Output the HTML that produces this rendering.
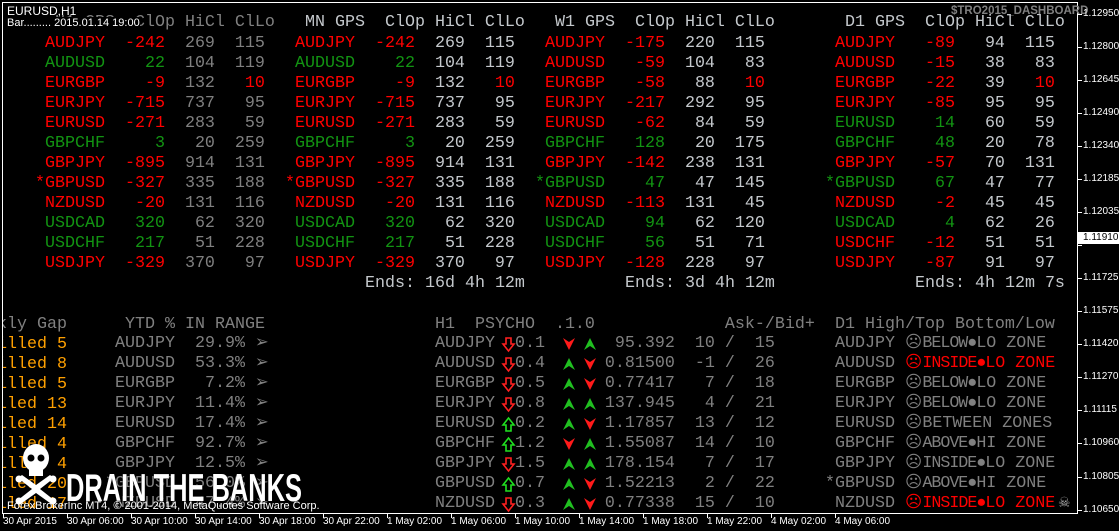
<!DOCTYPE html>
<html><head><meta charset="utf-8"><style>
html,body{margin:0;padding:0;background:#000;width:1119px;height:531px;overflow:hidden;position:relative}
.p{position:absolute;white-space:pre;font-family:"Liberation Mono",monospace;font-size:16.67px;line-height:20px;margin-top:2px}
.s{position:absolute;white-space:pre;font-family:"Liberation Sans",sans-serif;font-size:11px;line-height:12px;color:#fff}
.r{color:#ff0000}.g{color:#129412}.y{color:#808080}.L{color:#c4c8cc}.o{color:#ffa000}
.ax{position:absolute;left:1077px;width:5px;height:1px;background:#fff}
.tk{position:absolute;top:513px;width:1px;height:5px;background:#fff}
.pa{font-size:10px !important;left:1083px}
.ta{font-size:10px !important;top:516px}
</style></head><body>
<div style="position:absolute;left:2px;top:2px;width:1074px;height:510px;border:1px solid #fff"></div>

<div class="p y" style="left:55px;top:11px">H1 GPS  ClOp HiCl ClLo</div>
<div class="p y" style="left:35px;top:32px"><span class="r"> AUDJPY  -242</span>  269  115
<span class="g"> AUDUSD    22</span>  104  119
<span class="r"> EURGBP    -9</span>  132<span class="r">   10</span>
<span class="r"> EURJPY  -715</span>  737   95
<span class="r"> EURUSD  -271</span>  283   59
<span class="g"> GBPCHF     3</span>   20  259
<span class="r"> GBPJPY  -895</span>  914  131
<span class="r">*GBPUSD  -327</span>  335  188
<span class="r"> NZDUSD   -20</span>  131  116
<span class="g"> USDCAD   320</span>   62  320
<span class="g"> USDCHF   217</span>   51  228
<span class="r"> USDJPY  -329</span>  370   97</div>

<div class="p L" style="left:305px;top:11px">MN GPS  ClOp HiCl ClLo</div>
<div class="p L" style="left:285px;top:32px"><span class="r"> AUDJPY  -242</span>  269  115
<span class="g"> AUDUSD    22</span>  104  119
<span class="r"> EURGBP    -9</span>  132<span class="r">   10</span>
<span class="r"> EURJPY  -715</span>  737   95
<span class="r"> EURUSD  -271</span>  283   59
<span class="g"> GBPCHF     3</span>   20  259
<span class="r"> GBPJPY  -895</span>  914  131
<span class="r">*GBPUSD  -327</span>  335  188
<span class="r"> NZDUSD   -20</span>  131  116
<span class="g"> USDCAD   320</span>   62  320
<span class="g"> USDCHF   217</span>   51  228
<span class="r"> USDJPY  -329</span>  370   97</div>
<div class="p L" style="left:365px;top:272px">Ends: 16d 4h 12m</div>

<div class="p L" style="left:555px;top:11px">W1 GPS  ClOp HiCl ClLo</div>
<div class="p L" style="left:535px;top:32px"><span class="r"> AUDJPY  -175</span>  220  115
<span class="r"> AUDUSD   -59</span>  104   83
<span class="r"> EURGBP   -58</span>   88<span class="r">   10</span>
<span class="r"> EURJPY  -217</span>  292   95
<span class="r"> EURUSD   -62</span>   84   59
<span class="g"> GBPCHF   128</span>   20  175
<span class="r"> GBPJPY  -142</span>  238  131
<span class="g">*GBPUSD    47</span>   47  145
<span class="r"> NZDUSD  -113</span>  131   45
<span class="g"> USDCAD    94</span>   62  120
<span class="g"> USDCHF    56</span>   51   71
<span class="r"> USDJPY  -128</span>  228   97</div>
<div class="p L" style="left:625px;top:272px">Ends: 3d 4h 12m</div>

<div class="s" style="left:951px;top:5px;color:#808080;font-weight:bold;font-size:11.5px">$TRO2015_DASHBOARD</div>
<div class="p L" style="left:845px;top:11px">D1 GPS  ClOp HiCl ClLo</div>
<div class="p L" style="left:825px;top:32px"><span class="r"> AUDJPY   -89</span>   94  115
<span class="r"> AUDUSD   -15</span>   38   83
<span class="r"> EURGBP   -22</span>   39<span class="r">   10</span>
<span class="r"> EURJPY   -85</span>   95   95
<span class="g"> EURUSD    14</span>   60   59
<span class="g"> GBPCHF    48</span>   20   78
<span class="r"> GBPJPY   -57</span>   70  131
<span class="g">*GBPUSD    67</span>   47   77
<span class="r"> NZDUSD    -2</span>   45   45
<span class="g"> USDCAD     4</span>   62   26
<span class="r"> USDCHF   -12</span>   51   51
<span class="r"> USDJPY   -87</span>   91   97</div>
<div class="p L" style="left:915px;top:272px">Ends: 4h 12m 7s</div>

<div class="s" style="left:7px;top:5px;font-size:12px">EURUSD,H1</div>
<div class="s" style="left:7px;top:17px;font-size:11px;background:#000">Bar......... 2015.01.14 19:00</div>

<div style="position:absolute;left:3px;top:313px;width:64px;height:200px;overflow:hidden">
<div class="p" style="right:0;top:0;text-align:right"><span class="y">Weekly Gap</span>
<span class="o">Filled 5
Filled 8
Filled 5
Filled 13
Filled 14
Filled 4
Filled 4
Filled 20
Filled 17</span></div></div>

<div class="p y" style="left:125px;top:313px">YTD % IN RANGE</div>
<div class="p y" style="left:105px;top:332px"> AUDJPY  29.9% ➢
 AUDUSD  53.3% ➢
 EURGBP   7.2% ➢
 EURJPY  11.4% ➢
 EURUSD  17.4% ➢
 GBPCHF  92.7% ➢
 GBPJPY  12.5% ➢
*GBPUSD  56.0% ➢
 NZDUSD  47.4% ➢</div>

<div class="p y" style="left:435px;top:313px">H1  PSYCHO  .1.0             Ask-/Bid+</div>
<div class="p y" style="left:435px;top:332px">AUDJPY  0.1       95.392  10 /  15
AUDUSD  0.4      0.81500  -1 /  26
EURGBP  0.5      0.77417   7 /  18
EURJPY  0.8      137.945   4 /  21
EURUSD  0.2      1.17857  13 /  12
GBPCHF  1.2      1.55087  14 /  10
GBPJPY  1.5      178.154   7 /  17
GBPUSD  0.7      1.52213   2 /  22
NZDUSD  0.3      0.77338  15 /  10</div>
<svg style="position:absolute;left:0;top:2px" width="1119" height="531">
<defs>
<g id="dn"><path d="M3 0h5v6h3l-5.5 7L0 6h3z" fill="none" stroke="#ff2020" stroke-width="1.6"/></g>
<g id="up"><path d="M3 13h5V7h3L5.5 0 0 7h3z" fill="none" stroke="#20e020" stroke-width="1.6"/></g>
<g id="mu"><path d="M0 12L6 0l6 12-6-4z" fill="#20c020"/></g>
<g id="md"><path d="M0 0l6 12 6-12-6 4z" fill="#ff1a1a"/></g>
</defs>
<use href="#dn" x="503" y="336"/><use href="#md" x="563" y="336"/><use href="#mu" x="584" y="336"/>
<use href="#dn" x="503" y="356"/><use href="#mu" x="563" y="356"/><use href="#md" x="584" y="356"/>
<use href="#dn" x="503" y="376"/><use href="#mu" x="563" y="376"/><use href="#md" x="584" y="376"/>
<use href="#dn" x="503" y="396"/><use href="#mu" x="563" y="396"/><use href="#mu" x="584" y="396"/>
<use href="#up" x="503" y="416"/><use href="#mu" x="563" y="416"/><use href="#md" x="584" y="416"/>
<use href="#up" x="503" y="436"/><use href="#md" x="563" y="436"/><use href="#mu" x="584" y="436"/>
<use href="#dn" x="503" y="456"/><use href="#mu" x="563" y="456"/><use href="#mu" x="584" y="456"/>
<use href="#up" x="503" y="476"/><use href="#mu" x="563" y="476"/><use href="#md" x="584" y="476"/>
<use href="#dn" x="503" y="496"/><use href="#mu" x="563" y="496"/><use href="#md" x="584" y="496"/>
</svg>

<div class="p y" style="left:835px;top:313px">D1 High/Top Bottom/Low</div>
<div class="p y" style="left:825px;top:332px"> AUDJPY ☹<span style="letter-spacing:-1px">BELOW●</span>LO ZONE
<span class="y"> AUDUSD </span><span class="r">☹<span style="letter-spacing:-1px">INSIDE●</span>LO ZONE</span>
 EURGBP ☹<span style="letter-spacing:-1px">BELOW●</span>LO ZONE
 EURJPY ☹<span style="letter-spacing:-1px">BELOW●</span>LO ZONE
 EURUSD ☹BETWEEN ZONES
 GBPCHF ☹<span style="letter-spacing:-1px">ABOVE●</span>HI ZONE
 GBPJPY ☹<span style="letter-spacing:-1px">INSIDE●</span>LO ZONE
*GBPUSD ☹<span style="letter-spacing:-1px">ABOVE●</span>HI ZONE
 NZDUSD <span class="r">☹<span style="letter-spacing:-1px">INSIDE●</span>LO ZONE</span></div>
<div class="p" style="left:1058px;top:492px;color:#aaa;font-size:14px">☠</div>

<svg style="position:absolute;left:0;top:0" width="320" height="515">
<g fill="#fff">
<ellipse cx="36" cy="458" rx="13" ry="14"/>
<rect x="29" y="466" width="14" height="10"/>
<path d="M18 478l4-3 14 10 14-10 4 3-14 11 14 11-4 3-14-10-14 10-4-3 14-11z"/>
<circle cx="19" cy="479" r="3.5"/><circle cx="53" cy="479" r="3.5"/><circle cx="19" cy="501" r="3.5"/><circle cx="53" cy="501" r="3.5"/>
</g>
<circle cx="31" cy="458" r="3.5" fill="#000"/><circle cx="41" cy="458" r="3.5" fill="#000"/>
<text x="66" y="501" textLength="236" lengthAdjust="spacingAndGlyphs" font-family="Liberation Sans Narrow, Liberation Sans, sans-serif" font-weight="bold" font-size="39" fill="#fff" stroke="#000" stroke-width="1" paint-order="stroke">DRAIN THE BANKS</text>
</svg>
<div class="s" style="left:7px;top:500px;font-size:11px">ForexBrokerInc MT4, © 2001-2014, MetaQuotes Software Corp.</div>

<div class="s pa" style="top:8px">1.12950</div>
<div class="s pa" style="top:41px">1.12800</div>
<div class="s pa" style="top:74px">1.12645</div>
<div class="s pa" style="top:107px">1.12490</div>
<div class="s pa" style="top:140px">1.12340</div>
<div class="s pa" style="top:173px">1.12185</div>
<div class="s pa" style="top:206px">1.12035</div>
<div class="s" style="left:1078px;top:232px;font-size:10px;background:#fff;color:#000;padding:0 5px 0 5px">1.11910</div>
<div class="s pa" style="top:272px">1.11725</div>
<div class="s pa" style="top:305px">1.11575</div>
<div class="s pa" style="top:338px">1.11420</div>
<div class="s pa" style="top:371px">1.11270</div>
<div class="s pa" style="top:404px">1.11115</div>
<div class="s pa" style="top:437px">1.10960</div>
<div class="s pa" style="top:471px">1.10805</div>
<div class="s pa" style="top:504px">1.10650</div>
<div class="ax" style="top:14px"></div><div class="ax" style="top:47px"></div><div class="ax" style="top:80px"></div><div class="ax" style="top:113px"></div><div class="ax" style="top:146px"></div><div class="ax" style="top:179px"></div><div class="ax" style="top:212px"></div><div class="ax" style="top:245px"></div><div class="ax" style="top:278px"></div><div class="ax" style="top:311px"></div><div class="ax" style="top:344px"></div><div class="ax" style="top:377px"></div><div class="ax" style="top:410px"></div><div class="ax" style="top:443px"></div><div class="ax" style="top:477px"></div><div class="ax" style="top:510px"></div>

<div class="tk" style="left:3px"></div><div class="tk" style="left:67px"></div><div class="tk" style="left:131px"></div><div class="tk" style="left:195px"></div><div class="tk" style="left:259px"></div><div class="tk" style="left:323px"></div><div class="tk" style="left:387px"></div><div class="tk" style="left:451px"></div><div class="tk" style="left:515px"></div><div class="tk" style="left:579px"></div><div class="tk" style="left:643px"></div><div class="tk" style="left:707px"></div><div class="tk" style="left:771px"></div><div class="tk" style="left:835px"></div>
<div class="s ta" style="left:3px">30 Apr 2015</div>
<div class="s ta" style="left:67px">30 Apr 06:00</div>
<div class="s ta" style="left:131px">30 Apr 10:00</div>
<div class="s ta" style="left:195px">30 Apr 14:00</div>
<div class="s ta" style="left:259px">30 Apr 18:00</div>
<div class="s ta" style="left:323px">30 Apr 22:00</div>
<div class="s ta" style="left:387px">1 May 02:00</div>
<div class="s ta" style="left:451px">1 May 06:00</div>
<div class="s ta" style="left:515px">1 May 10:00</div>
<div class="s ta" style="left:579px">1 May 14:00</div>
<div class="s ta" style="left:643px">1 May 18:00</div>
<div class="s ta" style="left:707px">1 May 22:00</div>
<div class="s ta" style="left:771px">4 May 02:00</div>
<div class="s ta" style="left:835px">4 May 06:00</div>
</body></html>
